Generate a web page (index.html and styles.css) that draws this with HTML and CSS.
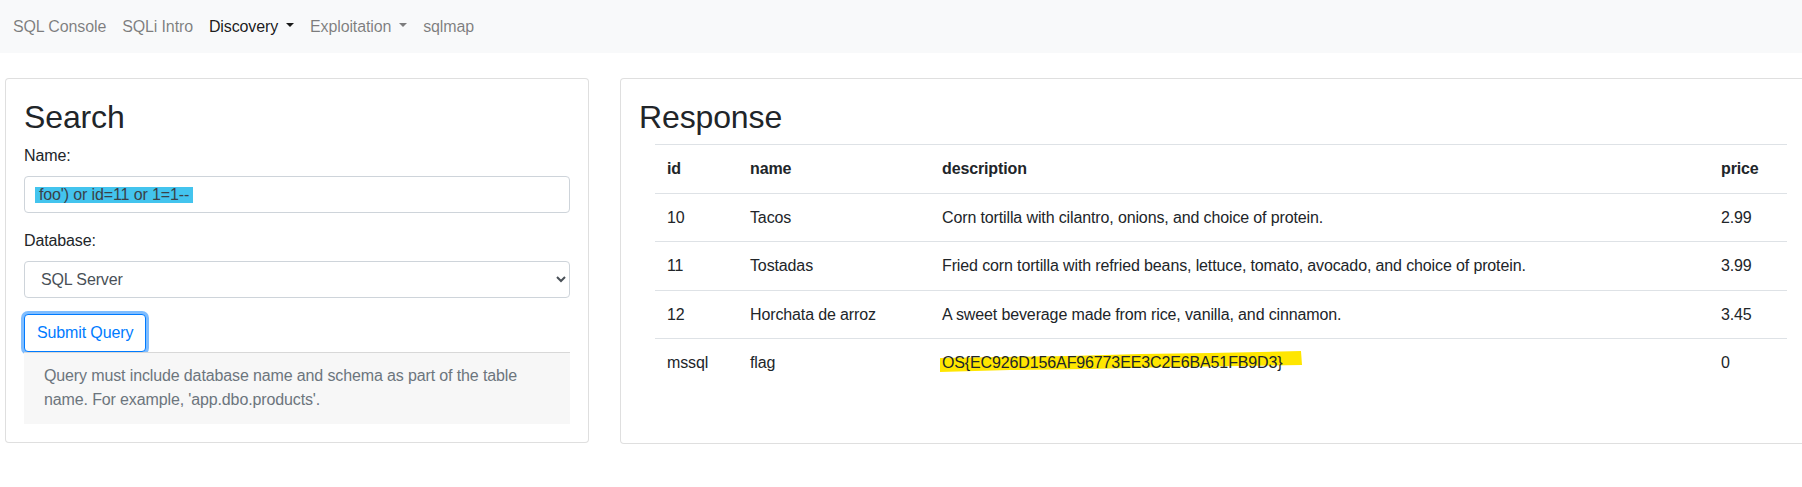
FILE: index.html
```html
<!DOCTYPE html>
<html lang="en">
<head>
<meta charset="utf-8">
<title>SQL Console - Discovery</title>
<link rel="stylesheet" href="styles.css">
</head>
<body>
<nav class="navbar">
  <a class="nav-link" href="#">SQL Console</a>
  <a class="nav-link" href="#">SQLi Intro</a>
  <a class="nav-link active" href="#">Discovery<span class="caret"></span></a>
  <a class="nav-link" href="#">Exploitation<span class="caret"></span></a>
  <a class="nav-link" href="#">sqlmap</a>
</nav>
<main class="main">
  <section class="card search-card">
    <div class="card-body">
      <h2 class="card-title">Search</h2>
      <div class="form-group">
        <label class="label">Name:</label>
        <div class="form-control text-input" role="textbox"><span class="sel">foo') or id=11 or 1=1--&nbsp;</span></div>
      </div>
      <div class="form-group">
        <label class="label" for="db">Database:</label>
        <select id="db" class="form-control select-input">
          <option>SQL Server</option>
        </select>
      </div>
      <button class="btn btn-focus" type="button">Submit Query</button>
      <div class="card-footer">Query must include database name and schema as part of the table name. For example, 'app.dbo.products'.</div>
    </div>
  </section>
  <section class="card response-card">
    <div class="card-body">
      <h2 class="card-title">Response</h2>
      <div class="table-wrap">
        <table class="table">
          <colgroup>
            <col class="c-id"><col class="c-name"><col class="c-desc"><col class="c-price">
          </colgroup>
          <thead>
            <tr><th>id</th><th>name</th><th>description</th><th>price</th></tr>
          </thead>
          <tbody>
            <tr><td>10</td><td>Tacos</td><td>Corn tortilla with cilantro, onions, and choice of protein.</td><td>2.99</td></tr>
            <tr><td>11</td><td>Tostadas</td><td>Fried corn tortilla with refried beans, lettuce, tomato, avocado, and choice of protein.</td><td>3.99</td></tr>
            <tr><td>12</td><td>Horchata de arroz</td><td>A sweet beverage made from rice, vanilla, and cinnamon.</td><td>3.45</td></tr>
            <tr><td>mssql</td><td>flag</td><td><span class="flag"><svg class="marker" width="362" height="22" viewBox="0 0 362 22" aria-hidden="true"><polygon points="0,7 60,6 130,5 200,3 270,2 361,0 362,14 300,15 230,16 150,18 70,19 0,21" fill="#ffe600"/></svg><span class="flag-text">OS{EC926D156AF96773EE3C2E6BA51FB9D3}</span></span></td><td>0</td></tr>
          </tbody>
        </table>
      </div>
    </div>
  </section>
</main>
</body>
</html>
```
FILE: styles.css
```css
* { box-sizing: border-box; }

body {
  margin: 0;
  font-family: "Liberation Sans", Arial, sans-serif;
  font-size: 16px;
  line-height: 1.5;
  letter-spacing: -0.008em;
  color: #212529;
  background: #fff;
  overflow: hidden;
}

.navbar {
  display: flex;
  align-items: center;
  height: 53px;
  padding: 0 5px;
  background: #f8f9fa;
}

.nav-link {
  display: block;
  padding: 0 8px;
  line-height: 24px;
  color: rgba(0, 0, 0, 0.5);
  text-decoration: none;
}

.nav-link.active { color: rgba(0, 0, 0, 0.9); }

.caret {
  display: inline-block;
  margin-left: 8px;
  vertical-align: 5px;
  border-top: 4px solid;
  border-left: 4px solid transparent;
  border-right: 4px solid transparent;
}

.main {
  display: flex;
  align-items: flex-start;
  gap: 31px;
  padding: 25px 0 0 5px;
  overflow: hidden;
}

.card {
  flex: none;
  background: #fff;
  border: 1px solid rgba(0, 0, 0, 0.125);
  border-radius: 4px;
}

.search-card { width: 584px; }
.response-card { width: 1203px; }

.card-body { padding: 19px 18px 18px; }

.card-title {
  margin: 0 0 8px;
  font-size: 32px;
  font-weight: 400;
  line-height: 1.2;
}

.form-group { margin-bottom: 16px; }

.label {
  display: block;
  margin-bottom: 8px;
  line-height: 24px;
}

.form-control {
  display: block;
  width: 100%;
  height: 37px;
  border: 1px solid #ced4da;
  border-radius: 4px;
  background: #fff;
  color: #495057;
  font-family: inherit;
  font-size: 16px;
  letter-spacing: inherit;
}

.text-input {
  display: flex;
  align-items: center;
  padding: 0 12px 0 14px;
}

.sel {
  display: inline-block;
  height: 16px;
  line-height: 16px;
  margin-left: -4px;
  padding-left: 4px;
  background: #43c4ee;
  color: #3a4148;
}

.select-input { padding: 0 12px; }

.btn {
  display: block;
  height: 38px;
  padding: 6px 12px;
  font-family: inherit;
  font-size: 16px;
  line-height: 24px;
  letter-spacing: inherit;
  color: #007bff;
  background: #fff;
  border: 1px solid #007bff;
  border-radius: 4px;
}

.btn-focus { box-shadow: 0 0 0 3px rgba(0, 123, 255, 0.5); }

.card-footer {
  padding: 11px 20px 12px;
  background: #f7f7f7;
  border-top: 1px solid rgba(0, 0, 0, 0.125);
  color: #6c757d;
}

.table-wrap { padding-left: 16px; }

.table {
  width: 1132px;
  table-layout: fixed;
  border-collapse: collapse;
  margin-bottom: 38px;
}

.c-id { width: 83px; }
.c-name { width: 192px; }
.c-desc { width: 779px; }
.c-price { width: 78px; }

.table th,
.table td {
  padding: 12px;
  line-height: 23.5px;
  text-align: left;
  vertical-align: top;
  border-top: 1px solid #dee2e6;
  white-space: nowrap;
}

.table th { font-weight: 700; }

.flag {
  position: relative;
  display: inline-block;
}

.marker {
  position: absolute;
  left: -2px;
  top: 0;
}

.flag-text { position: relative; }
```
